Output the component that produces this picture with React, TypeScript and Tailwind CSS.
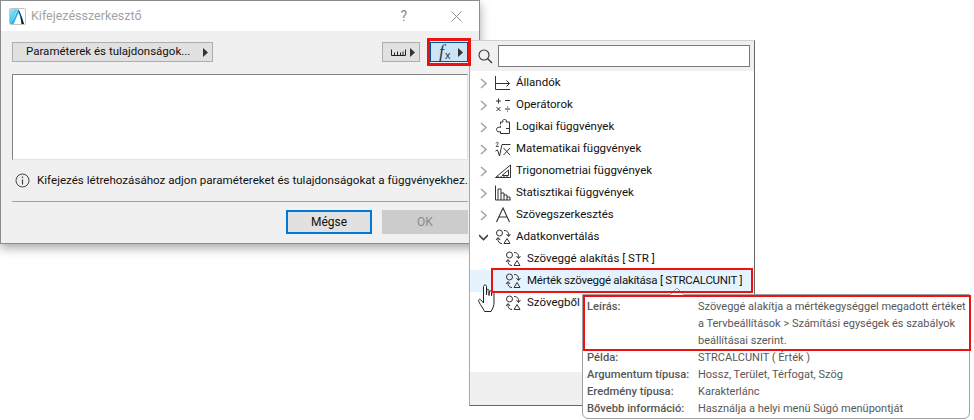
import type { ReactNode } from "react";

function Caret({ className = "" }: { className?: string }) {
  return (
    <svg width="5" height="9" viewBox="0 0 5 9" className={className}>
      <path d="M0 0 L5 4.5 L0 9 Z" fill="#333" />
    </svg>
  );
}

function Chevron({ open }: { open?: boolean }) {
  return (
    <svg width="9" height="11" viewBox="0 0 9 11" className="shrink-0">
      {open ? (
        <path d="M0 3 L4.5 7.5 L9 3" fill="none" stroke="#444" strokeWidth="1.6" />
      ) : (
        <path d="M2 1 L7 5.5 L2 10" fill="none" stroke="#a6a6a6" strokeWidth="1.6" />
      )}
    </svg>
  );
}

function Logo() {
  return (
    <svg width="17" height="17" viewBox="0 0 17 17" className="shrink-0">
      <defs>
        <linearGradient id="lg" x1="0" y1="0" x2="0.6" y2="1">
          <stop offset="0" stopColor="#a5ecfa" />
          <stop offset="1" stopColor="#12b0ee" />
        </linearGradient>
      </defs>
      <rect x="0.5" y="0.5" width="16" height="16" rx="1" fill="#fff" stroke="#c4c4c4" />
      <path d="M1 16 C4 12 6 6 9 1 L1 1 Z" fill="url(#lg)" />
      <path d="M1 16 C4 13 7 6 9 1.5 C10 2 11 4 12 7 L15 16 H12.5 C12 11 11 7 9.5 5 C8 8 6 13 4.5 16 Z" fill="#1ab4ef" />
      <path d="M9 1.5 C11 3 13.5 11 15 16 H12.5 C12 11 11 6 9 1.5 Z" fill="#123" />
    </svg>
  );
}

function Icon({ children }: { children: ReactNode }) {
  return (
    <svg width="16" height="16" viewBox="0 0 16 16" fill="none" stroke="#333" strokeWidth="1" className="shrink-0">
      {children}
    </svg>
  );
}

const icons: Record<string, ReactNode> = {
  constant: (
    <path d="M0.5 1 V14.5 H15 M0.5 8.5 H14.5 M11.5 5.5 L14.5 8.5 L11.5 11.5" />
  ),
  operator: (
    <path d="M1 4 H6 M3.5 1.5 V6.5 M10 3.5 H15 M1.5 10 L5.5 14 M5.5 10 L1.5 14 M10 12 H15 M12.5 9.5 V10.5 M12.5 13.5 V14.5" />
  ),
  puzzle: (
    <path d="M5.5 5.5 V3 H8 C7 1.5 8 0.5 9.5 0.5 C11 0.5 12 1.5 11 3 H14.5 V14.5 H5.5 V12.5 C4 13.5 1.5 12.5 1.5 10.5 C1.5 8.5 4 7.5 5.5 8.5 V7 M11 9.5 H14.5" />
  ),
  root: (
    <>
      <path d="M0.5 10 L2.5 9 L4.5 15 L7 3.5 H15.5 M8.5 7 L15 14 M15 7 L8.5 14" />
      <path d="M1 2.5 C1.5 0.5 4 1 3 3 L1 5.5 H4" strokeWidth="0.8" />
    </>
  ),
  trig: <path d="M0.5 14.5 L15.5 2 V14.5 Z M7 12.5 L13.5 7 V12.5 Z M3 14.5 V13 M6 14.5 V13 M9 14.5 V13 M12 14.5 V13" />,
  stats: (
    <path d="M0.5 0.5 V15 H15.5 M3 15 V4 H6 V15 M6 8 H9 V15 M9 10 H12 V15 M12 12 H15 V15" />
  ),
  letter: <path d="M1.5 15 L8 1 L14.5 15 M4 10 H12" strokeWidth="1.1" />,
  convert: (
    <>
      <circle cx="4.5" cy="4" r="3" />
      <path d="M9 1.5 C12.5 1.5 14 3.5 13.5 7 M11.5 5 L13.5 7.5 L15.5 5" />
      <path d="M9 14.5 L12 9.5 L15 14.5 Z" />
      <path d="M7 14.5 C4 14.5 2.5 12.5 3 9 M1 11 L3 8.5 L5 11" />
    </>
  ),
};

const groups = [
  { icon: "constant", label: "Állandók" },
  { icon: "operator", label: "Operátorok" },
  { icon: "puzzle", label: "Logikai függvények" },
  { icon: "root", label: "Matematikai függvények" },
  { icon: "trig", label: "Trigonometriai függvények" },
  { icon: "stats", label: "Statisztikai függvények" },
  { icon: "letter", label: "Szövegszerkesztés" },
];

const details = [
  ["Példa:", "STRCALCUNIT ( Érték )"],
  ["Argumentum típusa:", "Hossz, Terület, Térfogat, Szög"],
  ["Eredmény típusa:", "Karakterlánc"],
  ["Bővebb információ:", "Használja a helyi menü Súgó menüpontját"],
];

function Dialog() {
  return (
    <div className="absolute left-0 top-0 w-[480px] h-[244px] flex flex-col border border-[#8c8c8c] shadow-[0_4px_10px_rgba(0,0,0,0.35)]">
      <div className="h-[30px] bg-white flex items-center pl-[8px] shrink-0">
        <Logo />
        <span className="ml-[5px] text-[#a3a3a3] text-[12.5px] whitespace-nowrap">Kifejezésszerkesztő</span>
        <span className="ml-auto text-[#8a8a8a] text-[14px] mr-[44px]">?</span>
        <svg width="11" height="11" viewBox="0 0 11 11" className="mr-[17px]">
          <path d="M0.5 0.5 L10.5 10.5 M10.5 0.5 L0.5 10.5" stroke="#8a8a8a" />
        </svg>
      </div>
      <div className="flex-1 bg-[#f0f0f0] flex flex-col pl-[11px] pr-[11px]">
        <div className="flex items-center mt-[11px] h-[20px]">
          <button className="w-[201px] h-[20px] bg-[#e1e1e1] border border-[#adadad] flex items-center pl-[13px] pr-[4px] text-[#111] text-[11.5px] whitespace-nowrap">
            <span>Paraméterek és tulajdonságok...</span>
            <Caret className="ml-auto" />
          </button>
          <button className="ml-auto w-[38px] h-[20px] bg-[#e1e1e1] border border-[#adadad] flex items-center pl-[8px] pr-[4px]">
            <svg width="15" height="7" viewBox="0 0 15 7">
              <path d="M0.5 0.5 V6.5 H14.5 V0.5 M3.5 6 V3.5 M6.5 6 V2.5 M9.5 6 V3.5 M12 6 V2.5" fill="none" stroke="#222" />
            </svg>
            <Caret className="ml-auto" />
          </button>
          <button className="ml-[10px] w-[38px] h-[20px] bg-[#cce4f7] border border-[#005499] flex items-center pl-[8px] pr-[4px] text-[#333]">
            <span className="font-['Liberation_Serif',serif] italic text-[18px] leading-none">f</span>
            <span className="font-['Liberation_Sans',sans-serif] text-[11px] leading-none mt-[6px] ml-[1px]">x</span>
            <Caret className="ml-auto" />
          </button>
        </div>
        <div className="mt-[12px] h-[86px] bg-white border-t border-l border-t-[#828282] border-l-[#828282] border-r border-b border-r-[#e3e3e3] border-b-[#e3e3e3]" />
        <div className="flex items-center h-[41px] -ml-[1px]">
          <svg width="15" height="15" viewBox="0 0 15 15" className="ml-[4px] shrink-0">
            <circle cx="7.5" cy="7.5" r="6.5" fill="none" stroke="#444" />
            <path d="M7.5 6.5 V11.5 M7.5 3.5 V5" stroke="#444" strokeWidth="1.2" />
          </svg>
          <span className="ml-[7px] text-[11.6px] text-[#111] whitespace-nowrap">
            Kifejezés létrehozásához adjon paramétereket és tulajdonságokat a függvényekhez.
          </span>
        </div>
        <div className="border-t border-[#a0a0a0] flex justify-end gap-[10px] pt-[8px]">
          <button className="w-[86px] h-[24px] bg-[#e1e1e1] border-2 border-[#0078d7] text-[12px] text-[#111]">Mégse</button>
          <button className="w-[86px] h-[24px] bg-[#cccccc] text-[12px] text-[#8a8a8a]">OK</button>
        </div>
      </div>
    </div>
  );
}

function Row({ indent, children }: { indent: string; children: ReactNode }) {
  return <div className={`h-[22px] flex items-center whitespace-nowrap ${indent}`}>{children}</div>;
}

function FunctionPanel() {
  return (
    <div className="absolute left-[469px] top-[40px] w-[286px] h-[366px] flex flex-col border border-[#a8a8a8] border-r-[#666] border-b-[#666] border-t-[#d0d0d0] bg-white">
      <div className="h-[30px] bg-[#f0f0f0] flex items-center shrink-0 pl-[8px]">
        <svg width="15" height="15" viewBox="0 0 15 15" className="shrink-0">
          <circle cx="6" cy="6" r="5" fill="none" stroke="#333" strokeWidth="1.1" />
          <path d="M9.5 9.5 L14 14" stroke="#333" strokeWidth="1.3" />
        </svg>
        <div className="ml-[5px] w-[252px] h-[22px] bg-white border border-[#7a7a7a]" />
      </div>
      <div className="flex-1 text-[11.5px] text-[#111] pt-[1px]">
        {groups.map((g) => (
          <Row key={g.label} indent="pl-[9px]">
            <Chevron />
            <span className="ml-[7px]"><Icon>{icons[g.icon]}</Icon></span>
            <span className="ml-[5px]">{g.label}</span>
          </Row>
        ))}
        <Row indent="pl-[9px]">
          <Chevron open />
          <span className="ml-[7px]"><Icon>{icons.convert}</Icon></span>
          <span className="ml-[5px]">Adatkonvertálás</span>
        </Row>
        <Row indent="pl-[35px]">
          <Icon>{icons.convert}</Icon>
          <span className="ml-[6px]">Szöveggé alakítás [ STR ]</span>
        </Row>
        <Row indent="pl-[35px] bg-[#e5f3ff]">
          <Icon>{icons.convert}</Icon>
          <span className="ml-[6px] tracking-[-0.25px]">Mérték szöveggé alakítása [ STRCALCUNIT ]</span>
        </Row>
        <Row indent="pl-[35px]">
          <Icon>{icons.convert}</Icon>
          <span className="ml-[6px]">Szövegből</span>
        </Row>
      </div>
      <div className="h-[33px] bg-[#f0f0f0] shrink-0" />
    </div>
  );
}

function Tooltip() {
  return (
    <div className="absolute left-[582px] top-[294px] w-[388px] h-[125px] bg-white border border-[#a0a0a0] rounded-b-[6px] pl-[4px] pt-[3px] text-[11px] leading-[17px] text-[#575757]">
      <svg width="14" height="7" viewBox="0 0 14 7" className="absolute left-[87px] -top-[7px]">
        <path d="M0 7 L7 0 L14 7" fill="#fff" stroke="#a0a0a0" />
      </svg>
      <div className="flex">
        <span className="w-[111px] font-medium shrink-0 text-[11.2px]">Leírás:</span>
        <span className="whitespace-pre">
          {"Szöveggé alakítja a mértékegységgel megadott értéket\na Tervbeállítások > Számítási egységek és szabályok\nbeállításai szerint."}
        </span>
      </div>
      {details.map(([k, v]) => (
        <div key={k} className="flex">
          <span className="w-[111px] font-medium shrink-0 whitespace-nowrap text-[11.2px]">{k}</span>
          <span className="whitespace-nowrap">{v}</span>
        </div>
      ))}
    </div>
  );
}

function HandCursor() {
  return (
    <svg width="18" height="29" viewBox="0 0 18 29" className="absolute left-[478px] top-[284px]">
      <path
        d="M6 1.5 C7 0.5 8.5 1 8.5 2.5 V11 L8.8 6 C9 5 11 5 11 6.5 V11.5 L11.3 7.5 C11.5 6.5 13.5 6.5 13.5 8 V12 L13.8 9 C14 8 16 8 16 9.5 V18 C16 22 15 24 13 27.5 H6.5 C5 24 3 22 1 18 C0 16 1 14.5 3 16 L5.5 19 V2.5 Z"
        fill="#fff"
        stroke="#222"
        strokeWidth="1"
      />
    </svg>
  );
}

export default function App() {
  return (
    <div className="relative w-[974px] h-[420px] bg-white overflow-hidden font-['Roboto',sans-serif]">
      <Dialog />
      <FunctionPanel />
      <Tooltip />
      <HandCursor />
      {/* red callouts */}
      <div className="absolute left-[427px] top-[38px] w-[44px] h-[28px] border-[3px] border-[#ee1111]" />
      <div className="absolute left-[491px] top-[268px] w-[262px] h-[25px] border-2 border-[#ee1111]" />
      <div className="absolute left-[583px] top-[295px] w-[388px] h-[56px] border-2 border-[#ee1111]" />
    </div>
  );
}
